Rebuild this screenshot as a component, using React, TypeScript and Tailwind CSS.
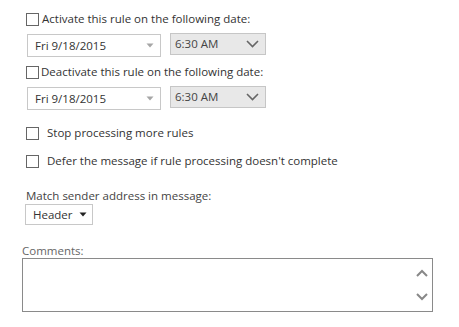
import React from "react";

const font = { fontFamily: '"Segoe UI", "Open Sans", sans-serif' };

function Check() {
  return <span className="block w-[13px] h-[13px] border border-[#666] bg-white shrink-0" />;
}

function DateBox() {
  return (
    <div className="flex items-center w-[134px] h-[23px] border border-[#c8c8c8] bg-white pl-[7px] pr-[6px] text-[#333]">
      <span className="flex-1">Fri 9/18/2015</span>
      <svg width="8" height="5" viewBox="0 0 8 5"><path d="M0.5 0.5 L7.5 0.5 L4 4.5 Z" fill="#a6a6a6" /></svg>
    </div>
  );
}

function TimeBox() {
  return (
    <div className="flex items-center w-[96px] h-[22px] border border-[#c6c6c6] bg-[#e8e8e8] pl-[4px] pr-[6px] text-[#444]">
      <span className="flex-1">6:30 AM</span>
      <svg width="13" height="8" viewBox="0 0 13 8"><path d="M1 1 L6.5 6.5 L12 1" fill="none" stroke="#666" strokeWidth="1.6" /></svg>
    </div>
  );
}

export default function App() {
  return (
    <div className="w-[459px] h-[327px] bg-white text-[11.5px] text-[#333] overflow-hidden relative" style={font}>
      <div className="pl-[26px] pt-[12px]">
        <div className="flex items-center gap-[3px] h-[14px]">
          <Check />
          <span className="leading-none">Activate this rule on the following date:</span>
        </div>
        <div className="flex items-start mt-[7px] ml-[1px] gap-[9px]">
          <div className="mt-[1px]"><DateBox /></div>
          <TimeBox />
        </div>
        <div className="flex items-center gap-[2px] h-[14px] mt-[8px]">
          <Check />
          <span className="leading-none">Deactivate this rule on the following date:</span>
        </div>
        <div className="flex items-start mt-[7px] ml-[1px] gap-[9px]">
          <div className="mt-[1px]"><DateBox /></div>
          <TimeBox />
        </div>
        <div className="flex items-center gap-[8px] h-[14px] mt-[16px]">
          <Check />
          <span className="leading-none">Stop processing more rules</span>
        </div>
        <div className="flex items-center gap-[8px] h-[14px] mt-[14px]">
          <Check />
          <span className="leading-none">Defer the message if rule processing doesn't complete</span>
        </div>
        <div className="mt-[22px] h-[13px] leading-none text-[#444]">Match sender address in message:</div>
        <div className="mt-[1px] -ml-[1px] flex items-center w-[68px] h-[21px] border border-[#c8c8c8] bg-white pl-[7px] pr-[5px] text-[#333]">
          <span className="flex-1">Header</span>
          <svg width="8" height="5" viewBox="0 0 8 5"><path d="M0.5 0.5 L7.5 0.5 L4 4.5 Z" fill="#222" /></svg>
        </div>
      </div>
      <div className="pl-[22px] mt-[20px]">
        <div className="h-[13px] leading-none text-[#666]">Comments:</div>
        <div className="w-[411px] h-[54px] border border-[#8a8a8a] bg-white flex flex-col items-end justify-between pr-[4px] py-[10px]">
          <svg width="12" height="8" viewBox="0 0 12 8"><path d="M1 7 L6 2 L11 7" fill="none" stroke="#888" strokeWidth="2" /></svg>
          <svg width="12" height="8" viewBox="0 0 12 8"><path d="M1 1 L6 6 L11 1" fill="none" stroke="#888" strokeWidth="2" /></svg>
        </div>
      </div>
    </div>
  );
}
